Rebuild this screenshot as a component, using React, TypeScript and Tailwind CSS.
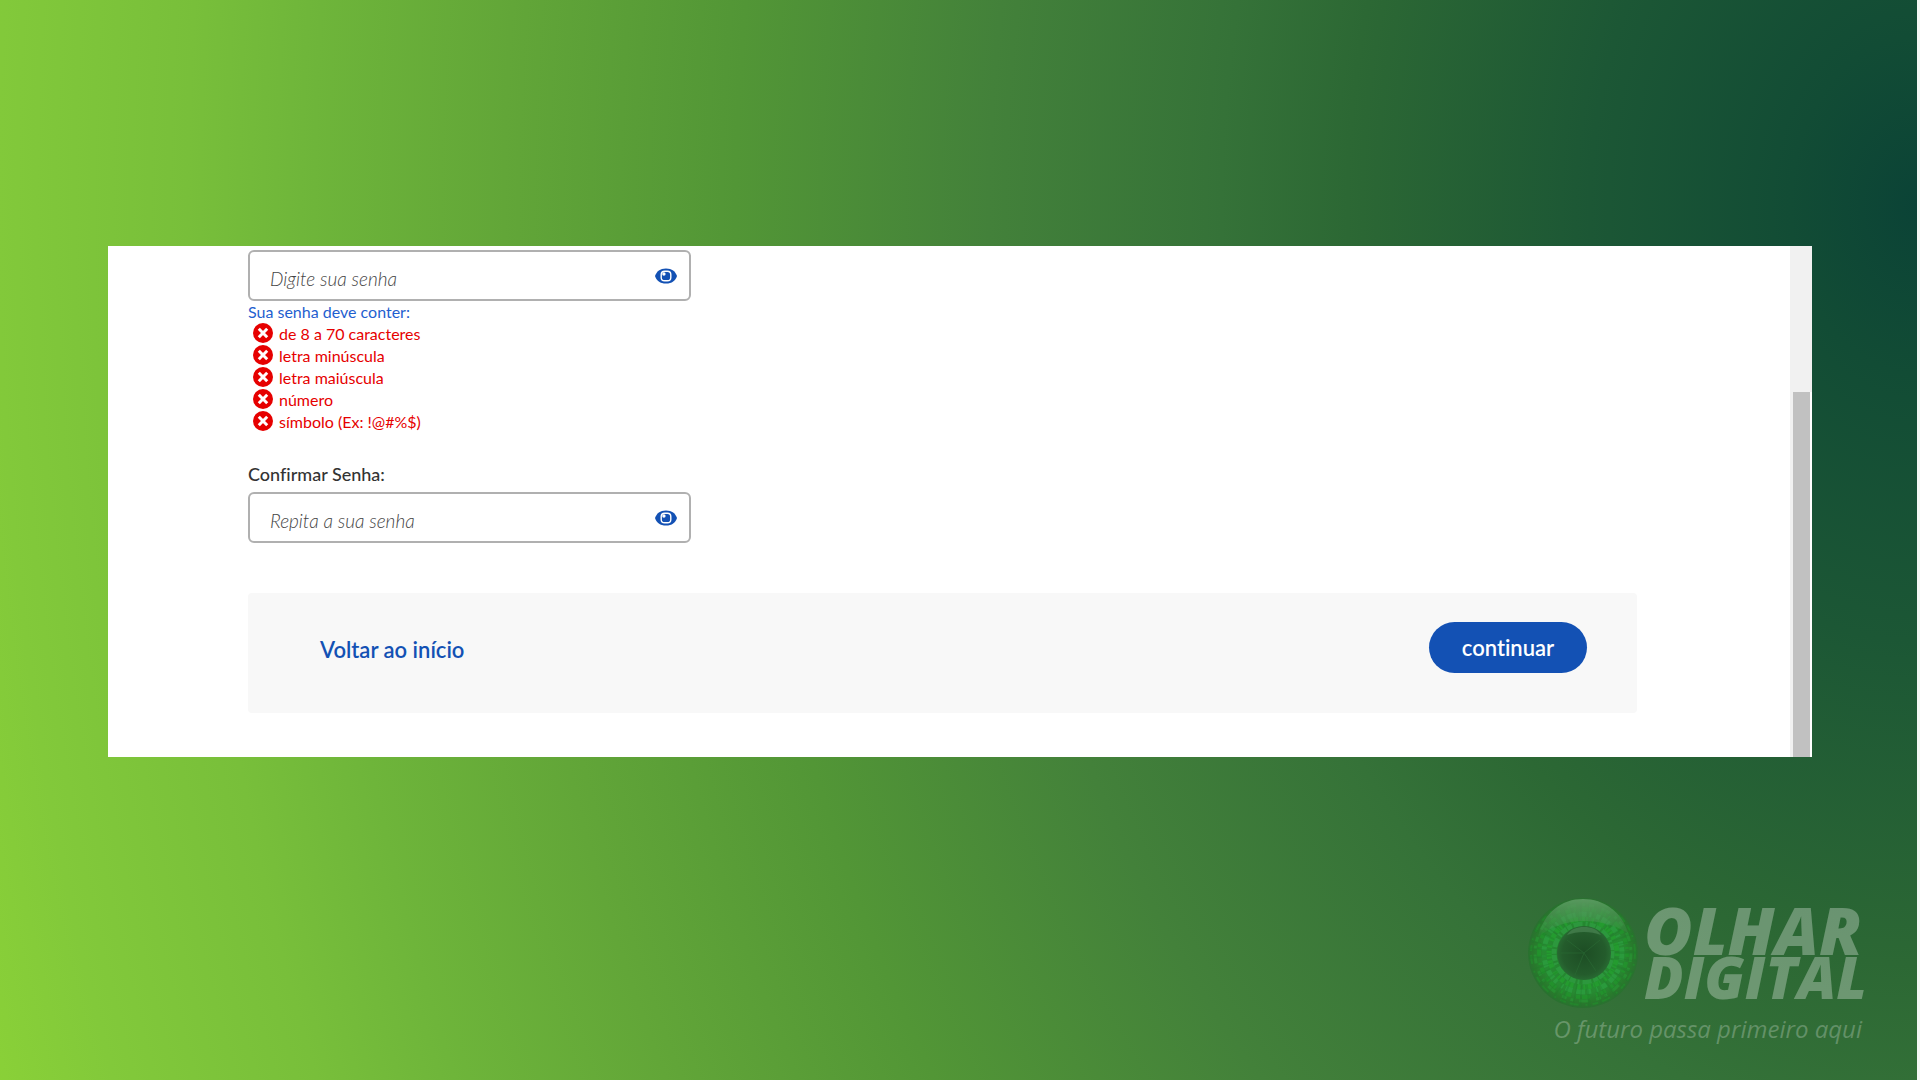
const rules = [
  "de 8 a 70 caracteres",
  "letra minúscula",
  "letra maiúscula",
  "número",
  "símbolo (Ex: !@#%$)",
];

function EyeIcon() {
  return (
    <svg viewBox="0 0 22 16" className="h-4 w-[22px]" aria-hidden="true">
      <path
        d="M0 8C1.6 3.2 5 .4 11 .4S20.4 3.2 22 8c-1.6 4.8-5 7.6-11 7.6S1.6 12.8 0 8z"
        fill="#1351b4"
      />
      <rect x="6.2" y="3.2" width="9.6" height="9.6" rx="3.4" fill="#1351b4" stroke="#fff" strokeWidth="1.4" />
      <circle cx="8.9" cy="6" r="1.7" fill="#fff" />
    </svg>
  );
}

function ErrorIcon() {
  return (
    <svg viewBox="0 0 20 20" className="size-5 shrink-0" aria-hidden="true">
      <circle cx="10" cy="10" r="10" fill="#e60000" />
      <path d="M5.8 5.8l8.4 8.4M14.2 5.8l-8.4 8.4" stroke="#fff" strokeWidth="3" />
    </svg>
  );
}

function PasswordInput({ id, label, placeholder }: { id: string; label: string; placeholder: string }) {
  return (
    <div className="flex h-[51px] w-full max-w-[443px] items-center rounded-md border-2 border-[#b0b0b0] bg-white pr-3">
      <input
        id={id}
        type="password"
        aria-label={label}
        placeholder={placeholder}
        className="h-full min-w-0 flex-1 bg-transparent pt-1.5 pl-5 text-[19px] font-light outline-none placeholder:text-[#444] placeholder:italic"
      />
      <button type="button" aria-label="Mostrar senha">
        <EyeIcon />
      </button>
    </div>
  );
}

const irisRings = [
  { r: 29, w: 5, dash: "5 2 9 3 2 2 6 1", color: "#2fa043", o: 0.7 },
  { r: 34, w: 5, dash: "3 4 8 2 5 1 2 3", color: "#24a02f", o: 0.8 },
  { r: 39, w: 5, dash: "7 3 2 5 4 2 9 4", color: "#2c9f40", o: 0.75 },
  { r: 44, w: 4, dash: "4 5 6 3 2 6 8 2", color: "#22962c", o: 0.75 },
  { r: 48, w: 3, dash: "9 6 3 4 5 8", color: "#289a35", o: 0.6 },
  { r: 52, w: 2, dash: "6 5 2 7 9 4", color: "#21902b", o: 0.6 },
];

function EyeLogo() {
  return (
    <svg viewBox="0 0 112 112" className="size-28 shrink-0" aria-hidden="true">
      <defs>
        <radialGradient id="iris">
          <stop offset="0.4" stopColor="#24852f" />
          <stop offset="0.72" stopColor="#278b32" />
          <stop offset="0.9" stopColor="#287a2c" />
          <stop offset="1" stopColor="#2a7030" />
        </radialGradient>
        <radialGradient id="pupil">
          <stop offset="0" stopColor="#1d4d24" />
          <stop offset="0.8" stopColor="#245c2c" />
          <stop offset="1" stopColor="#286a32" />
        </radialGradient>
        <linearGradient id="gloss" x1="0" y1="0" x2="0" y2="1">
          <stop offset="0" stopColor="#5b9a61" stopOpacity="0.95" />
          <stop offset="1" stopColor="#4a9455" stopOpacity="0.1" />
        </linearGradient>
      </defs>
      <circle cx="57" cy="56" r="55" fill="url(#iris)" />
      {irisRings.map((ring) => (
        <circle
          key={ring.r}
          cx="57"
          cy="56"
          r={ring.r}
          fill="none"
          stroke={ring.color}
          strokeWidth={ring.w}
          strokeDasharray={ring.dash}
          opacity={ring.o}
        />
      ))}
      <circle cx="57" cy="56" r="43" fill="none" stroke="#1f7a2a" strokeWidth="22" strokeDasharray="1 5 1 8 2 6" opacity="0.35" />
      <path d="M12 40C18 15 36 2 57 2s39 13 45 34C87 27 72 24 57 24S25 29 12 40z" fill="url(#gloss)" />
      <circle cx="58" cy="56" r="27" fill="url(#pupil)" />
      <path d="M58 56L41 43M58 56l16-13M58 56l-9 22M58 56l12 18M58 56H35" stroke="#2b6c35" strokeWidth="1" opacity="0.6" />
      <path d="M41 38c4-6 10-8 17-8s13 2 17 8c-10-4-24-4-34 0z" fill="#4a8352" opacity="0.7" />
    </svg>
  );
}

export default function App() {
  return (
    <div className="flex min-h-screen flex-col border-r-[3px] border-[#f4f7f4] bg-[radial-gradient(110%_260%_at_100%_19%,#0b4336_0%,#124c35_6%,#1c5735_15.5%,#2c6834_27%,#357238_33%,#43813a_44%,#529636_56%,#62a638_67%,#6eb53a_76%,#78bf3a_82%,#82c93a_91%,#8fd636_100%)] pt-[246px] font-['Lato',sans-serif] [font-variant-ligatures:none]">
      <main className="mr-[105px] ml-[108px] flex bg-white">
        <form className="flex-1 pt-1 pr-[153px] pb-11 pl-[140px]">
          <PasswordInput id="senha" label="Senha" placeholder="Digite sua senha" />
          <p className="text-base leading-[21px] text-[#1f5fd0]">Sua senha deve conter:</p>
          <ul className="pl-[5px] text-base leading-[22px] text-[#e60000]">
            {rules.map((rule) => (
              <li key={rule} className="flex h-[22px] items-center gap-1.5">
                <ErrorIcon />
                <span className="pt-0.5">{rule}</span>
              </li>
            ))}
          </ul>
          <label htmlFor="confirmar" className="mt-7 mb-1 block text-[18px] leading-7 font-medium text-[#333]">
            Confirmar Senha:
          </label>
          <PasswordInput id="confirmar" label="Confirmar Senha" placeholder="Repita a sua senha" />
          <div className="mt-[50px] flex h-30 items-start justify-between rounded-sm bg-[#f8f8f8] pt-[29px] pr-[50px] pl-[72px]">
            <a href="#inicio" className="pt-3 text-[22px] leading-8 font-semibold text-[#1351b4]">
              Voltar ao início
            </a>
            <button
              type="button"
              className="h-[51px] w-[158px] rounded-full bg-[#1351b4] text-[22px] font-semibold text-white"
            >
              continuar
            </button>
          </div>
        </form>
        <div className="flex w-[22px] flex-col bg-[#f1f1f1] pt-[146px]">
          <div className="flex-1 border-r-2 border-white pl-[3px]">
            <div className="h-full bg-[#c1c1c1]" />
          </div>
        </div>
      </main>
      <footer className="mt-[140px] mr-[51px] flex flex-col items-end font-['Open_Sans',sans-serif] italic">
        <div className="flex items-center gap-1.5">
          <EyeLogo />
          <div className="w-[222px] font-black text-white/30">
            <p className="text-[66px] leading-[48px]">OLHAR</p>
            <p className="text-[58px] leading-[48px]">DIGITAL</p>
          </div>
        </div>
        <p className="mt-1 mr-1 text-2xl text-white/25">O futuro passa primeiro aqui</p>
      </footer>
    </div>
  );
}
